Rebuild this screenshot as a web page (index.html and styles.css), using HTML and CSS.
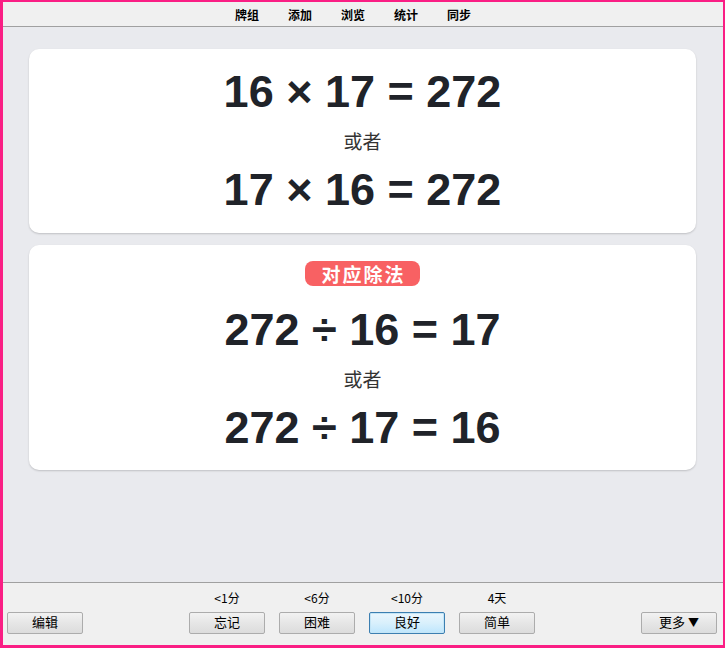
FILE: index.html
```html
<!DOCTYPE html>
<html lang="zh">
<head>
    <meta charset="UTF-8">
    <meta name="viewport" content="width=device-width, initial-scale=1.0">
    <title>Review</title>
    <link rel="stylesheet" href="styles.css">
</head>
<body>
    <div class="window">
        <!-- Top menu -->
        <div class="topbar">
            <nav class="menu">
                <span>牌组</span>
                <span>添加</span>
                <span>浏览</span>
                <span>统计</span>
                <span>同步</span>
            </nav>
        </div>

        <!-- Card content -->
        <div class="main">
            <div class="card">
                <div class="eq">16 × 17 = 272</div>
                <div class="or">或者</div>
                <div class="eq">17 × 16 = 272</div>
            </div>
            <div class="card card-back">
                <span class="badge">对应除法</span>
                <div class="eq">272 ÷ 16 = 17</div>
                <div class="or">或者</div>
                <div class="eq">272 ÷ 17 = 16</div>
            </div>
        </div>

        <!-- Answer buttons -->
        <div class="bottombar">
            <button class="btn">编辑</button>
            <div class="answers">
                <div class="answer">
                    <span class="due">&lt;1分</span>
                    <button class="btn">忘记</button>
                </div>
                <div class="answer">
                    <span class="due">&lt;6分</span>
                    <button class="btn">困难</button>
                </div>
                <div class="answer">
                    <span class="due">&lt;10分</span>
                    <button class="btn btn-default">良好</button>
                </div>
                <div class="answer">
                    <span class="due">4天</span>
                    <button class="btn">简单</button>
                </div>
            </div>
            <button class="btn btn-more">更多 <span class="arrow">▼</span></button>
        </div>
    </div>
</body>
</html>
```

FILE: styles.css
```css
* {
    margin: 0;
    padding: 0;
    box-sizing: border-box;
}

body {
    font-family: "Liberation Sans", "Noto Sans CJK SC", sans-serif;
    background-color: #fa1e84;
}

/* Window frame */
.window {
    height: 100vh;
    border-style: solid;
    border-color: #fa1e84;
    border-width: 2px 2px 3px 3px;
    display: flex;
    flex-direction: column;
    background-color: #e9eaee;
}

/* Top menu */
.topbar {
    height: 25px;
    background-color: #f0f0f0;
    border-bottom: 1px solid #a0a0a0;
    display: flex;
    justify-content: center;
    align-items: center;
}

.menu {
    display: flex;
    gap: 29px;
    padding-right: 20px;
    font-family: "Noto Sans CJK SC", sans-serif;
    font-size: 12px;
    font-weight: bold;
    color: #000;
}

/* Cards */
.main {
    flex: 1;
    padding: 22px 27px 0 26px;
    display: flex;
    flex-direction: column;
    gap: 12px;
}

.card {
    background-color: #fff;
    border-radius: 10px;
    box-shadow: 0 1px 2px rgba(0, 0, 0, 0.18);
    padding: 17px 0;
    text-align: center;
}

.card-back {
    padding: 16px 0;
}

.eq {
    font-size: 45px;
    font-weight: bold;
    line-height: 52px;
    color: #202329;
}

.or {
    font-family: "Noto Sans CJK SC", serif;
    font-size: 19px;
    line-height: 46px;
    color: #333;
}

.badge {
    display: inline-block;
    height: 25px;
    line-height: 25px;
    padding: 0 14px 0 16px;
    margin-bottom: 18px;
    border-radius: 8px;
    background-color: #f86163;
    color: #fff;
    font-family: "Noto Sans CJK SC", serif;
    font-size: 19px;
    font-weight: bold;
    letter-spacing: 2px;
}

/* Bottom answer bar */
.bottombar {
    background-color: #f0f0f0;
    border-top: 1px solid #a0a0a0;
    padding: 7px 6px 11px 4px;
    display: flex;
    justify-content: space-between;
    align-items: flex-end;
}

.answers {
    display: flex;
    gap: 14px;
}

.answer {
    display: flex;
    flex-direction: column;
    align-items: center;
    gap: 6px;
}

.due {
    font-family: "Noto Sans CJK SC", sans-serif;
    font-size: 12px;
    line-height: 16px;
    color: #000;
}

.btn {
    width: 76px;
    height: 22px;
    padding-bottom: 3px;
    font-family: "Noto Sans CJK SC", sans-serif;
    font-size: 13px;
    line-height: 17px;
    color: #000;
    border: 1px solid #acacac;
    border-radius: 2px;
    background: linear-gradient(#f2f2f2, #e6e6e6 50%, #dcdcdc);
}

.btn-default {
    border-color: #3c7fb1;
    background: linear-gradient(#eaf6fd, #d9f0fc 50%, #bee6fd);
    box-shadow: inset 0 0 0 1px #c4e5f6;
}

.btn-more .arrow {
    font-size: 11px;
}
```
